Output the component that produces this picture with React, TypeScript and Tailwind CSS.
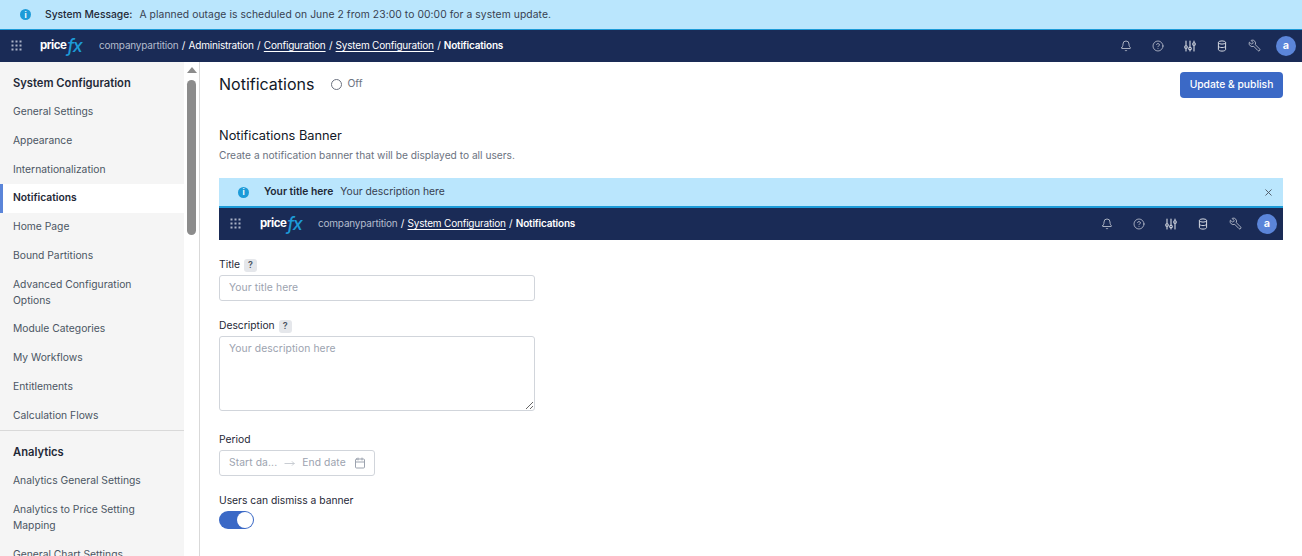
import { Bell, CircleHelp, Wrench, X, Calendar, MoveRight } from "lucide-react";

function Grip() {
  return (
    <svg width="11" height="11" viewBox="0 0 11 11" fill="currentColor" className="text-[#aab2c5]">
      {[0.5, 4.5, 8.5].map((y) =>
        [0.5, 4.5, 8.5].map((x) => <rect key={`${x}-${y}`} x={x} y={y} width="2" height="2" />)
      )}
    </svg>
  );
}

function Logo() {
  return (
    <span className="flex items-center w-[41px] h-[20px] text-white font-bold text-[11.5px] tracking-[-0.5px]">
      price
      <span className="text-[#1d9bd8] italic font-medium text-[18px] tracking-[-1.5px] ml-px">fx</span>
    </span>
  );
}

function InfoDot() {
  return (
    <span className="shrink-0 flex items-center justify-center w-[11px] h-[11px] rounded-full bg-[#1d9bd8] text-white text-[8px] font-bold leading-none">i</span>
  );
}

function SlidersIcon() {
  return (
    <svg width="12" height="12" viewBox="0 0 12 12" fill="none" stroke="currentColor" strokeWidth="1.1" strokeLinecap="round">
      <path d="M2 1v10M6 1v10M10 1v10" />
      <circle cx="2" cy="7" r="1.3" fill="#1a2b56" />
      <circle cx="6" cy="8.5" r="1.3" fill="#1a2b56" />
      <circle cx="10" cy="4" r="1.3" fill="#1a2b56" />
    </svg>
  );
}

function DbIcon() {
  return (
    <svg width="10" height="12" viewBox="0 0 10 12" fill="none" stroke="currentColor" strokeWidth="1">
      <ellipse cx="5" cy="2.5" rx="3.6" ry="1.6" />
      <path d="M1.4 2.5v7c0 .9 1.6 1.6 3.6 1.6s3.6-.7 3.6-1.6v-7M1.4 6c0 .9 1.6 1.6 3.6 1.6S8.600 6.900 8.600 6" />
    </svg>
  );
}

function NavIcons() {
  const icons = [
    <Bell key="bell" size={12} strokeWidth={1.5} />,
    <CircleHelp key="help" size={12} strokeWidth={1.4} />,
    <SlidersIcon key="sliders" />,
    <DbIcon key="db" />,
    <Wrench key="wrench" size={13} strokeWidth={1.4} className="-scale-x-100" />,
  ];
  return (
    <div className="flex items-center text-[#d5d9e2]">
      {icons.map((icon) => (
        <span key={icon.key} className="w-[32px] flex items-center justify-center">{icon}</span>
      ))}
      <span className="ml-[6px] flex items-center justify-center w-[20px] h-[20px] rounded-full bg-[#5b85d9] text-white text-[11px] font-semibold">a</span>
    </div>
  );
}

function Crumbs({ items }: { items: { text: string; link?: boolean; bold?: boolean }[] }) {
  return (
    <div className="flex items-center text-[10px] text-white tracking-[-0.2px]">
      <span className="text-[#b4bccd]">companypartition</span>
      {items.map((c) => (
        <span key={c.text} className="flex items-center">
          <span className="mx-[3.3px]">/</span>
          <span className={`${c.link ? "underline underline-offset-2" : ""} ${c.bold ? "font-semibold" : ""}`}>{c.text}</span>
        </span>
      ))}
    </div>
  );
}

function SideItem({ children, active }: { children: React.ReactNode; active?: boolean }) {
  return (
    <div
      className={
        active
          ? "bg-white border-l-[3px] border-[#5b85d9] mt-px -mb-px pl-[10px] pr-3 pt-[5.375px] pb-[7.375px] text-[10.3px] leading-4 font-semibold text-[#1f2937]"
          : "pl-[13px] pr-3 py-[6.375px] text-[10.3px] leading-4 text-[#4b5563]"
      }
    >
      {children}
    </div>
  );
}

function Help() {
  return (
    <span className="flex items-center justify-center w-[13px] h-[13px] rounded-[3px] bg-[#e5e7eb] text-[#4b5563] text-[9px] font-semibold">?</span>
  );
}

export default function App() {
  return (
    <div className="h-[556px] w-[1302px] overflow-hidden flex flex-col bg-white font-['Inter',sans-serif]">
      <div className="h-[30px] shrink-0 flex items-center bg-[#bae6fd] border-b border-[#1d9bd8] pl-[20px] text-[10.3px] text-[#374151]">
        <span className="mr-[14px]"><InfoDot /></span>
        <span className="font-medium mr-[7px] text-[#1f2937]">System Message:</span>
        <span className="tracking-[0.08px]">A planned outage is scheduled on June 2 from 23:00 to 00:00 for a system update.</span>
      </div>
      <div className="h-[32px] shrink-0 flex items-center justify-between bg-[#1a2b56] pl-[11px] pr-[6px] pb-px">
        <div className="flex items-center">
          <Grip />
          <div className="ml-[18px] mr-[18px]"><Logo /></div>
          <Crumbs
            items={[
              { text: "Administration" },
              { text: "Configuration", link: true },
              { text: "System Configuration", link: true },
              { text: "Notifications", bold: true },
            ]}
          />
        </div>
        <NavIcons />
      </div>

      <div className="flex flex-1 min-h-0">
        <div className="w-[200px] shrink-0 flex border-r border-[#d9d9d9] overflow-hidden">
          <div className="w-[184px] shrink-0 bg-[#f5f5f5]">
            <div className="pt-[12.625px] pb-[6px] pl-[13px] text-[11.2px] leading-4 font-semibold text-[#1f2937]">System Configuration</div>
            <SideItem>General Settings</SideItem>
            <SideItem>Appearance</SideItem>
            <SideItem>Internationalization</SideItem>
            <SideItem active>Notifications</SideItem>
            <SideItem>Home Page</SideItem>
            <SideItem>Bound Partitions</SideItem>
            <SideItem>Advanced Configuration Options</SideItem>
            <SideItem>Module Categories</SideItem>
            <SideItem>My Workflows</SideItem>
            <SideItem>Entitlements</SideItem>
            <SideItem>Calculation Flows</SideItem>
            <div className="mt-px border-t border-[#d9d9d9] pt-[13px] pb-[6px] pl-[13px] text-[11.2px] leading-4 font-semibold text-[#1f2937]">Analytics</div>
            <SideItem>Analytics General Settings</SideItem>
            <SideItem>Analytics to Price Setting Mapping</SideItem>
            <SideItem>General Chart Settings</SideItem>
          </div>
          <div className="flex-1 flex flex-col items-center pt-[5px]">
            <div className="w-0 h-0 border-x-[5px] border-x-transparent border-b-[6px] border-b-[#8c8c8c]" />
            <div className="mt-[7px] w-[9px] h-[155px] rounded-full bg-[#8c8c8c]" />
          </div>
        </div>

        <div className="flex-1 pl-[19px] pr-[19px] min-w-0">
          <div className="flex items-start justify-between pt-[10px]">
            <div className="flex items-center h-[24px]">
              <h1 className="text-[16px] font-normal text-[#111827]">Notifications</h1>
              <span className="ml-[17px] w-[11px] h-[11px] rounded-full border-[1.5px] border-[#6b7280]" />
              <span className="ml-[5px] text-[10.3px] text-[#6b7280]">Off</span>
            </div>
            <button className="h-[26px] w-[103px] rounded-[4px] bg-[#3b69c6] text-white text-[10.3px] font-medium">Update &amp; publish</button>
          </div>

          <h2 className="mt-[28px] text-[12.8px] leading-5 font-normal text-[#111827]">Notifications Banner</h2>
          <p className="mt-[1px] text-[10.2px] leading-4 text-[#6b7280]">Create a notification banner that will be displayed to all users.</p>

          <div className="mt-[15px]">
            <div className="h-[30px] flex items-center bg-[#bae6fd] border-b-2 border-[#1d9bd8] pl-[19px] pr-[9px] text-[10.3px] text-[#374151]">
              <span className="mr-[15px]"><InfoDot /></span>
              <span className="font-semibold text-[#1f2937] mr-[7px]">Your title here</span>
              <span>Your description here</span>
              <X size={11} className="ml-auto text-[#4b5563]" />
            </div>
            <div className="h-[32px] flex items-center justify-between bg-[#1a2b56] pl-[11px] pr-[6px] pb-px">
              <div className="flex items-center">
                <Grip />
                <div className="ml-[19px] mr-[17px]"><Logo /></div>
                <Crumbs items={[{ text: "System Configuration", link: true }, { text: "Notifications", bold: true }]} />
              </div>
              <NavIcons />
            </div>
          </div>

          <div className="mt-[17px] flex items-center gap-[4px] h-[16px] text-[10.3px] text-[#1f2937]">Title <Help /></div>
          <input readOnly placeholder="Your title here" className="mt-[2px] block w-[316px] h-[26px] px-[9px] pb-[3px] rounded-[3px] border border-[#d1d5db] text-[10.3px] tracking-[0.1px] placeholder:text-[#9ca3af] outline-none" />

          <div className="mt-[17px] flex items-center gap-[4px] h-[16px] text-[10.3px] text-[#1f2937]">Description <Help /></div>
          <textarea readOnly placeholder="Your description here" className="mt-[2px] block w-[316px] h-[75px] px-[9px] py-[4px] rounded-[3px] border border-[#d1d5db] text-[10.3px] tracking-[0.1px] placeholder:text-[#9ca3af] outline-none" />

          <div className="mt-[21px] h-[16px] text-[10.3px] text-[#1f2937]">Period</div>
          <div className="mt-[2px] w-[156px] h-[26px] flex items-center pl-[9px] pr-[8px] rounded-[3px] border border-[#d1d5db] text-[10.3px] tracking-[0.1px] text-[#9ca3af]">
            <span>Start da...</span>
            <MoveRight size={11} className="ml-[7px] mr-[7px] text-[#c4c8cf]" />
            <span>End date</span>
            <Calendar size={12} className="ml-auto" />
          </div>

          <div className="mt-[17px] h-[16px] text-[10.3px] text-[#1f2937]">Users can dismiss a banner</div>
          <div className="mt-[2px] w-[35px] h-[18px] rounded-full bg-[#3b69c6] flex items-center justify-end pr-[1px]">
            <span className="w-[16px] h-[16px] rounded-full bg-white" />
          </div>
        </div>
      </div>
    </div>
  );
}
